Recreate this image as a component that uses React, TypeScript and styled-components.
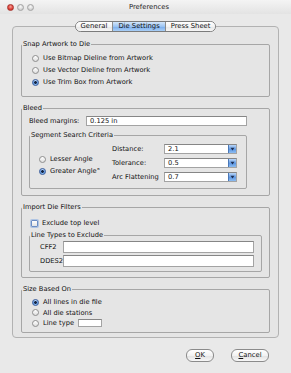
import styled, { createGlobalStyle } from "styled-components";

const GlobalStyle = createGlobalStyle`
  html, body { margin: 0; padding: 0; background: #e9e9e9; }
  * { box-sizing: border-box; }
`;

const Window = styled.div`
  width: 291px;
  height: 373px;
  overflow: hidden;
  display: flex;
  flex-direction: column;
  background: #e9e9e9;
  font-family: "DejaVu Sans", "Noto Sans", sans-serif;
  font-size: 6.7px;
  color: #111;
`;

const TitleBar = styled.div`
  height: 14px;
  display: grid;
  grid-template-columns: 1fr auto 1fr;
  align-items: center;
  padding-left: 7px;
  background: linear-gradient(#f4f4f4, #e3e3e3);
`;

const Lights = styled.div`
  display: flex;
  gap: 3px;
`;

const Light = styled.span<{ $red?: boolean }>`
  width: 7px;
  height: 7px;
  border-radius: 50%;
  border: 1px solid ${p => (p.$red ? "#a8322c" : "#a3a3a3")};
  background: ${p =>
    p.$red
      ? "radial-gradient(circle at 50% 35%, #f7a19a, #dd3e35 60%, #b8271f)"
      : "radial-gradient(circle at 50% 35%, #fafafa, #d6d6d6 60%, #c3c3c3)"};
`;

const Title = styled.div`
  font-size: 6.8px;
  color: #222;
`;

const Main = styled.div`
  padding: 0 12px;
  display: flex;
  flex-direction: column;
`;

const TabStrip = styled.div`
  margin-top: 7px;
  margin-bottom: -6px;
  display: flex;
  justify-content: center;
  position: relative;
  z-index: 1;
`;

const Segments = styled.div`
  display: flex;
  height: 11px;
  border: 1px solid #7b7b7b;
  border-radius: 6px;
  overflow: hidden;
`;

const Tab = styled.div<{ $active?: boolean }>`
  padding: 0 5px;
  line-height: 9px;
  font-size: 6.8px;
  color: #111;
  border-left: 1px solid #8c8c8c;
  background: ${p =>
    p.$active
      ? "linear-gradient(#d3e6fb, #9cc4f2 50%, #79acec 52%, #a9cff7)"
      : "linear-gradient(#ffffff, #f3f3f3 50%, #e6e6e6 52%, #f6f6f6)"};
  &:first-child {
    border-left: none;
  }
`;

const Panel = styled.div`
  border: 1px solid #b2b2b2;
  border-radius: 4px;
  background: #e5e5e5;
  padding: 13px 8px 4px;
  display: flex;
  flex-direction: column;
  gap: 7px;
`;

const Group = styled.fieldset`
  margin: 0;
  padding: 0;
  min-width: 0;
  border: 1px solid #a6a6a6;
  border-radius: 2px;
`;

const Legend = styled.legend`
  padding: 0 1px;
  margin-left: 0;
  line-height: 8px;
  font-size: 6.7px;
`;

const Body = styled.div<{ $pad: string }>`
  padding: ${p => p.$pad};
  display: flex;
  flex-direction: column;
`;

const Option = styled.div<{ $h: number }>`
  height: ${p => p.$h}px;
  display: flex;
  align-items: center;
  gap: 4px;
  white-space: nowrap;
`;

const Radio = styled.span<{ $on?: boolean }>`
  flex: none;
  width: 7px;
  height: 7px;
  border-radius: 50%;
  border: 1px solid ${p => (p.$on ? "#34589a" : "#8e8e8e")};
  background: ${p =>
    p.$on
      ? "radial-gradient(circle, #16233f 0 1.1px, transparent 1.6px), linear-gradient(#c4ddf9, #5b96e2 55%, #93c3f4)"
      : "linear-gradient(#ffffff, #dedede)"};
`;

const Check = styled.span`
  flex: none;
  width: 7px;
  height: 7px;
  margin-left: 2px;
  border-radius: 1px;
  border: 1px solid #6d8ec4;
  background: linear-gradient(#ffffff, #e3e3e3);
  box-shadow: 0 0 0 1px rgba(130, 170, 225, 0.55);
`;

const Row = styled.div<{ $h: number }>`
  height: ${p => p.$h}px;
  display: flex;
  align-items: center;
  gap: 2px;
  white-space: nowrap;
`;

const Label = styled.span<{ $w?: number }>`
  flex: none;
  width: ${p => (p.$w ? `${p.$w}px` : "auto")};
`;

const TextBox = styled.div<{ $w?: number }>`
  flex: ${p => (p.$w ? "none" : "1")};
  width: ${p => (p.$w ? `${p.$w}px` : "auto")};
  height: 100%;
  padding-left: 3px;
  display: flex;
  align-items: center;
  background: #fff;
  border: 1px solid #a3a3a3;
  border-top-color: #868686;
`;

const SubGroup = styled(Group)<{ $top: number }>`
  margin-top: ${p => p.$top}px;
`;

const Criteria = styled.div`
  display: flex;
  padding: 5px 8px 6px 9px;
`;

const AngleColumn = styled.div`
  width: 73px;
  padding-top: 9px;
  display: flex;
  flex-direction: column;
`;

const CriteriaGrid = styled.div`
  display: grid;
  grid-template-columns: 52px 73px;
  grid-auto-rows: 10px;
  row-gap: 4px;
  align-items: center;
  white-space: nowrap;
`;

const Select = styled.div`
  height: 10px;
  display: flex;
  background: #fff;
  border: 1px solid #a3a3a3;
  border-top-color: #868686;
`;

const SelectValue = styled.span`
  flex: 1;
  padding-left: 3px;
  line-height: 8px;
`;

const SelectArrow = styled.span`
  width: 8px;
  display: flex;
  align-items: center;
  justify-content: center;
  border-left: 1px solid #4a78b8;
  background: linear-gradient(#b9d6f8, #5f98e3 55%, #8cbcf1);
`;

const Footer = styled.div`
  margin-top: 11px;
  padding-right: 10px;
  display: flex;
  justify-content: flex-end;
  gap: 17px;
`;

const Button = styled.button<{ $w: number }>`
  width: ${p => p.$w}px;
  height: 13px;
  padding: 0;
  border: 1px solid #8b8b8b;
  border-radius: 6px;
  background: linear-gradient(#ffffff, #f2f2f2 50%, #e2e2e2 52%, #f7f7f7);
  font: inherit;
  font-size: 6.8px;
  color: #111;
`;

const Arrow = () => (
  <svg width="5" height="4" viewBox="0 0 5 4">
    <path d="M0.5 0.8h4L2.5 3.4z" fill="#1c2d52" />
  </svg>
);

export default function App() {
  return (
    <Window>
      <GlobalStyle />
      <TitleBar>
        <Lights>
          <Light $red />
          <Light />
          <Light />
        </Lights>
        <Title>Preferences</Title>
        <span />
      </TitleBar>

      <Main>
        <TabStrip>
          <Segments>
            <Tab>General</Tab>
            <Tab $active>Die Settings</Tab>
            <Tab>Press Sheet</Tab>
          </Segments>
        </TabStrip>

        <Panel>
          <Group>
            <Legend>Snap Artwork to Die</Legend>
            <Body $pad="4px 8px 8px 10px">
              <Option $h={12}><Radio />Use Bitmap Dieline from Artwork</Option>
              <Option $h={12}><Radio />Use Vector Dieline from Artwork</Option>
              <Option $h={12}><Radio $on />Use Trim Box from Artwork</Option>
            </Body>
          </Group>

          <Group>
            <Legend>Bleed</Legend>
            <Body $pad="4px 22px 6px 7px">
              <Row $h={10}>
                <Label $w={55}>Bleed margins:</Label>
                <TextBox>0.125 in</TextBox>
              </Row>
              <SubGroup $top={5}>
                <Legend>Segment Search Criteria</Legend>
                <Criteria>
                  <AngleColumn>
                    <Option $h={12}><Radio />Lesser Angle</Option>
                    <Option $h={12}><Radio $on />Greater Angle°</Option>
                  </AngleColumn>
                  <CriteriaGrid>
                    <span>Distance:</span>
                    <Select><SelectValue>2.1</SelectValue><SelectArrow><Arrow /></SelectArrow></Select>
                    <span>Tolerance:</span>
                    <Select><SelectValue>0.5</SelectValue><SelectArrow><Arrow /></SelectArrow></Select>
                    <span>Arc Flattening</span>
                    <Select><SelectValue>0.7</SelectValue><SelectArrow><Arrow /></SelectArrow></Select>
                  </CriteriaGrid>
                </Criteria>
              </SubGroup>
            </Body>
          </Group>

          <Group>
            <Legend>Import Die Filters</Legend>
            <Body $pad="7px 7px 5px 7px">
              <Option $h={10}><Check />Exclude top level</Option>
              <SubGroup $top={3}>
                <Legend>Line Types to Exclude</Legend>
                <Body $pad="2px 7px 4px 10px">
                  <Row $h={12}>
                    <Label $w={21}>CFF2</Label>
                    <TextBox />
                  </Row>
                  <Row $h={12} style={{ marginTop: 2 }}>
                    <Label $w={21}>DDES2</Label>
                    <TextBox />
                  </Row>
                </Body>
              </SubGroup>
            </Body>
          </Group>

          <Group>
            <Legend>Size Based On</Legend>
            <Body $pad="4px 8px 3px 10px">
              <Option $h={10.5}><Radio $on />All lines in die file</Option>
              <Option $h={10.5}><Radio />All die stations</Option>
              <Option $h={10.5}>
                <Radio />Line type<TextBox $w={24} style={{ height: 8 }} />
              </Option>
            </Body>
          </Group>
        </Panel>

        <Footer>
          <Button $w={28}><u>O</u>K</Button>
          <Button $w={38}><u>C</u>ancel</Button>
        </Footer>
      </Main>
    </Window>
  );
}
